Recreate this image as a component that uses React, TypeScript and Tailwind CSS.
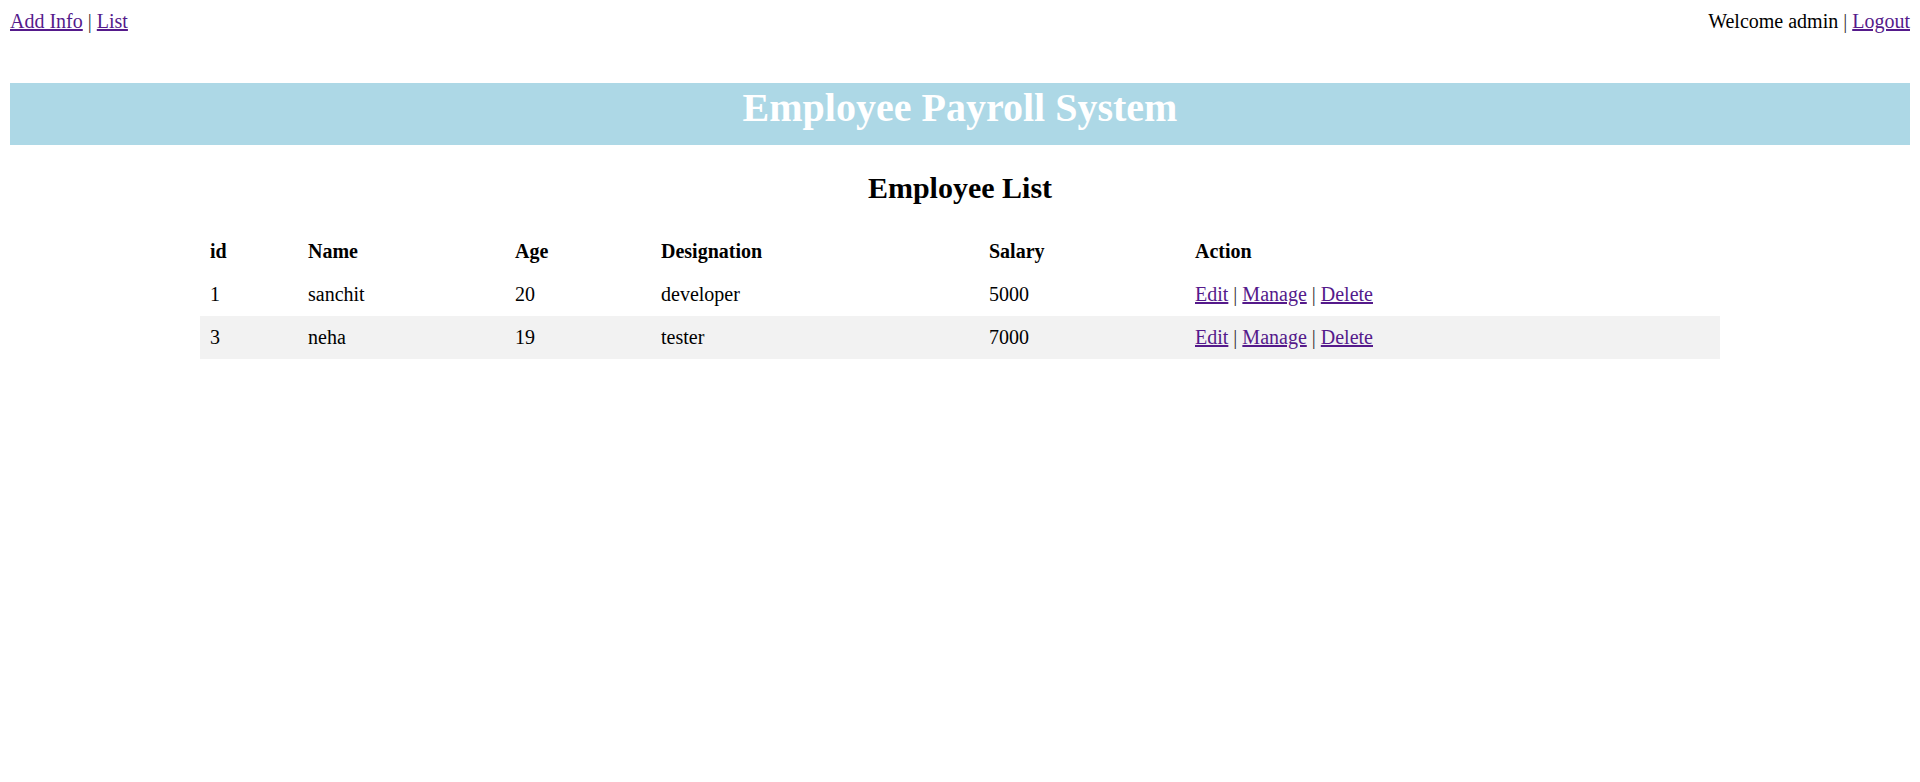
import React from "react";

const rows = [
  { id: 1, name: "sanchit", age: 20, designation: "developer", salary: 5000 },
  { id: 3, name: "neha", age: 19, designation: "tester", salary: 7000 },
];

function Sep() {
  return <span className="text-[#333]"> | </span>;
}

export default function App() {
  return (
    <div
      className="min-h-screen bg-white p-[10px] text-[20px] leading-[23px] text-black"
      style={{ fontFamily: '"Liberation Serif", "Times New Roman", serif' }}
    >
      <div className="flex justify-between">
        <div>
          <a href="#" className="text-[#551a8b] underline">
            Add Info
          </a>
          <Sep />
          <a href="#" className="text-[#551a8b] underline">
            List
          </a>
        </div>
        <div>
          Welcome admin
          <Sep />
          <a href="#" className="text-[#551a8b] underline">
            Logout
          </a>
        </div>
      </div>

      <div className="mt-[50px] flex h-[62px] items-start justify-center bg-[#add8e6] pt-[2px]">
        <h1 className="text-[40px] font-bold leading-[46px] text-white">
          Employee Payroll System
        </h1>
      </div>

      <h2 className="my-[25px] text-center text-[30px] font-bold leading-[35px]">
        Employee List
      </h2>

      <table className="mx-auto w-[80%] border-collapse">
        <thead>
          <tr className="text-left">
            <th className="w-[98px] p-[10px] font-bold">id</th>
            <th className="w-[207px] p-[10px] font-bold">Name</th>
            <th className="w-[146px] p-[10px] font-bold">Age</th>
            <th className="w-[328px] p-[10px] font-bold">Designation</th>
            <th className="w-[206px] p-[10px] font-bold">Salary</th>
            <th className="p-[10px] font-bold">Action</th>
          </tr>
        </thead>
        <tbody>
          {rows.map((r, i) => (
            <tr key={r.id} className={i % 2 === 1 ? "bg-[#f2f2f2]" : ""}>
              <td className="p-[10px]">{r.id}</td>
              <td className="p-[10px]">{r.name}</td>
              <td className="p-[10px]">{r.age}</td>
              <td className="p-[10px]">{r.designation}</td>
              <td className="p-[10px]">{r.salary}</td>
              <td className="p-[10px]">
                <a href="#" className="text-[#551a8b] underline">
                  Edit
                </a>
                <Sep />
                <a href="#" className="text-[#551a8b] underline">
                  Manage
                </a>
                <Sep />
                <a href="#" className="text-[#551a8b] underline">
                  Delete
                </a>
              </td>
            </tr>
          ))}
        </tbody>
      </table>
    </div>
  );
}
